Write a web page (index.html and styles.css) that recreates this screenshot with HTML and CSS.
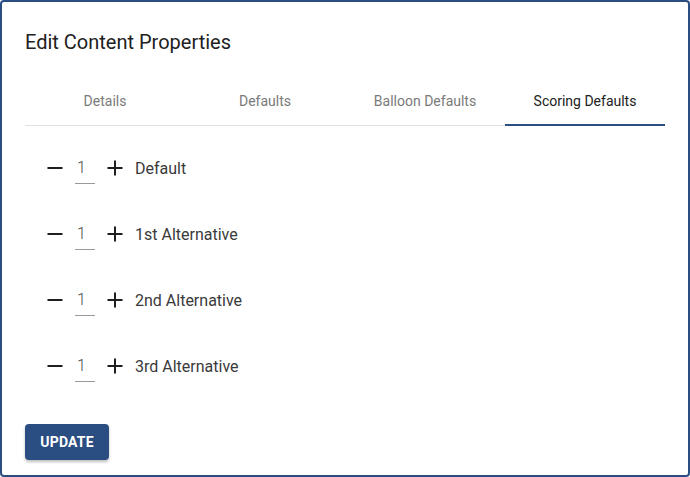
FILE: index.html
```html
<!DOCTYPE html>
<html>
<head>
<meta charset="utf-8">
<link rel="stylesheet" href="styles.css">
</head>
<body>
<div class="dialog">
  <h1 class="title">Edit Content Properties</h1>
  <div class="tabs">
    <div class="tab">Details</div>
    <div class="tab">Defaults</div>
    <div class="tab">Balloon Defaults</div>
    <div class="tab active">Scoring Defaults</div>
  </div>
  <div class="rows">
    <div class="row">
      <span class="btn-icon"><svg width="16" height="16" viewBox="0 0 16 16"><rect x="0.5" y="7" width="15" height="2" fill="#1f1f1f"/></svg></span>
      <span class="num">1</span>
      <span class="btn-icon"><svg width="16" height="16" viewBox="0 0 16 16"><rect x="0.5" y="7" width="15" height="2" fill="#1f1f1f"/><rect x="7" y="0.5" width="2" height="15" fill="#1f1f1f"/></svg></span>
      <span class="label">Default</span>
    </div>
    <div class="row">
      <span class="btn-icon"><svg width="16" height="16" viewBox="0 0 16 16"><rect x="0.5" y="7" width="15" height="2" fill="#1f1f1f"/></svg></span>
      <span class="num">1</span>
      <span class="btn-icon"><svg width="16" height="16" viewBox="0 0 16 16"><rect x="0.5" y="7" width="15" height="2" fill="#1f1f1f"/><rect x="7" y="0.5" width="2" height="15" fill="#1f1f1f"/></svg></span>
      <span class="label">1st Alternative</span>
    </div>
    <div class="row">
      <span class="btn-icon"><svg width="16" height="16" viewBox="0 0 16 16"><rect x="0.5" y="7" width="15" height="2" fill="#1f1f1f"/></svg></span>
      <span class="num">1</span>
      <span class="btn-icon"><svg width="16" height="16" viewBox="0 0 16 16"><rect x="0.5" y="7" width="15" height="2" fill="#1f1f1f"/><rect x="7" y="0.5" width="2" height="15" fill="#1f1f1f"/></svg></span>
      <span class="label">2nd Alternative</span>
    </div>
    <div class="row">
      <span class="btn-icon"><svg width="16" height="16" viewBox="0 0 16 16"><rect x="0.5" y="7" width="15" height="2" fill="#1f1f1f"/></svg></span>
      <span class="num">1</span>
      <span class="btn-icon"><svg width="16" height="16" viewBox="0 0 16 16"><rect x="0.5" y="7" width="15" height="2" fill="#1f1f1f"/><rect x="7" y="0.5" width="2" height="15" fill="#1f1f1f"/></svg></span>
      <span class="label">3rd Alternative</span>
    </div>
  </div>
  <div class="actions">
    <button class="update">UPDATE</button>
  </div>
</div>
</body>
</html>
```

FILE: styles.css
```css
* { box-sizing: border-box; }
html, body { margin: 0; padding: 0; background: #ffffff; }
body { font-family: Roboto, "Liberation Sans", sans-serif; }
.dialog {
  width: 690px;
  height: 477px;
  border: 2px solid #2a4d82;
  border-radius: 4px;
  padding: 24px 23px 0 23px;
  display: flex;
  flex-direction: column;
}
.title {
  margin: 0;
  font-size: 20px;
  font-weight: 400;
  line-height: 32px;
  color: #212121;
  letter-spacing: 0;
}
.tabs {
  margin-top: 19px;
  display: grid;
  grid-template-columns: repeat(4, 1fr);
  border-bottom: 1px solid #e0e0e0;
  width: 640px;
}
.tab {
  height: 49px;
  display: flex;
  align-items: center;
  justify-content: center;
  font-size: 14px;
  color: #7a7a7a;
  border-bottom: 2px solid transparent;
  margin-bottom: -1px;
  padding-top: 1px;
}
.tab.active {
  color: #212121;
  border-bottom-color: #2a4d82;
}
.rows {
  margin-top: 9px;
  display: flex;
  flex-direction: column;
}
.row {
  height: 66px;
  display: flex;
  align-items: center;
  padding-left: 22px;
}
.btn-icon { display: flex; width: 16px; height: 16px; }
.num {
  width: 20px;
  margin: 0 12px 0 12px;
  font-size: 16px;
  font-weight: 300;
  color: #4a4a4a;
  border-bottom: 1px solid #9a9a9a;
  padding: 0 0 6px 2px;
  position: relative;
  top: 3px;
}
.label {
  margin-left: 12px;
  font-size: 16px;
  color: #3a3a3a;
  padding-top: 1px;
}
.actions { margin-top: 25px; }
.update {
  width: 84px;
  height: 36px;
  border: none;
  border-radius: 4px;
  background: #2a4d82;
  color: #ffffff;
  font-family: Roboto, "Liberation Sans", sans-serif;
  font-weight: 700;
  font-size: 14px;
  letter-spacing: 0.2px;
  box-shadow: 0 2px 3px rgba(0,0,0,0.25);
  padding: 0;
}
```
